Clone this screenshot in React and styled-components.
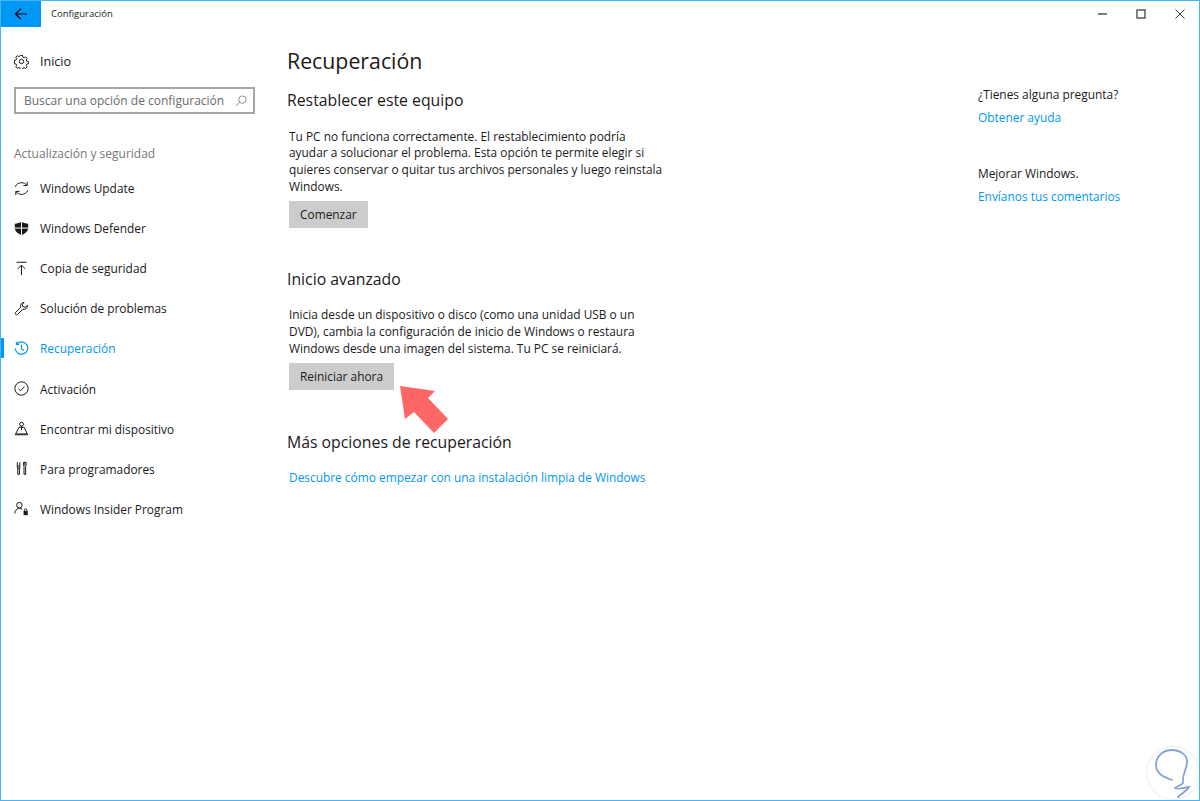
import styled, { createGlobalStyle } from "styled-components";

const ACCENT = "#0098f5";

const GlobalStyle = createGlobalStyle`
	html, body {
		margin: 0;
		padding: 0;
		height: 100%;
		background: #fff;
	}
	#root {
		height: 100%;
	}
	* {
		box-sizing: border-box;
	}
`;

const Stroke = ({ children, width = 1.2 }) => (
	<svg width="15" height="15" viewBox="0 0 18 18" fill="none" stroke="currentColor" strokeWidth={width}>
		{children}
	</svg>
);

const GearIcon = () => (
	<Stroke>
		<circle cx="9" cy="9" r="2.6" />
		<path d="M7.700 1.800h2.600l.4 2.100 1.500.7 1.900-1.100 1.700 1.800-1.100 1.800.6 1.500 2 .5v2.600l-2 .5-.6 1.500 1.100 1.800-1.800 1.800-1.800-1.100-1.500.6-.5 2H7.700l-.5-2-1.500-.6-1.800 1.100-1.800-1.800 1.100-1.800-.6-1.500-2-.5V7.600l2-.5.6-1.500-1.100-1.800 1.800-1.800 1.800 1.100 1.500-.7z" />
	</Stroke>
);
const UpdateIcon = () => (
	<Stroke>
		<path d="M1.500 7C2.500 4 5.500 2 9 2c2.600 0 4.800 1.100 6.300 3" />
		<path d="M16.500 11c-1 3-4 5-7.500 5-2.600 0-4.800-1.100-6.300-3" />
		<path d="M15.800 1v4.500h-4.500M2.200 17v-4.500h4.500" />
	</Stroke>
);
const ShieldIcon = () => (
	<svg width="15" height="15" viewBox="0 0 18 18">
		<path fill="currentColor" d="M9 1c2 1.300 5 2.300 8 2.300v5.200c0 4-3.500 6.800-8 8.500-4.500-1.700-8-4.500-8-8.500V3.300C4 3.300 7 2.300 9 1z" />
		<path stroke="#fff" strokeWidth="1.200" d="M9 1v16M1 8.500h16" />
	</svg>
);
const BackupIcon = () => (
	<Stroke>
		<path d="M3 1.500h12M9 17V5M4.500 9.500 9 5l4.500 4.500" />
	</Stroke>
);
const WrenchIcon = () => (
	<Stroke>
		<path d="M12 1.800a4.200 4.200 0 0 0-3.900 5.700L1.900 13.700a1.700 1.700 0 0 0 2.400 2.400l6.200-6.200A4.200 4.200 0 0 0 16 5.200l-2.600 2.500-2.900-1-.7-2.700 2.400-2.200z" />
	</Stroke>
);
const HistoryIcon = () => (
	<Stroke width={1.5}>
		<path d="M3.500 3.300A7.500 7.500 0 1 1 1.500 9" />
		<path d="M3 .8v3.200h3.400M9 4.500V9.500l3 2" />
	</Stroke>
);
const CheckCircleIcon = () => (
	<Stroke>
		<circle cx="9" cy="9" r="8" />
		<path d="M5.300 9.300 7.800 11.700 12.700 6.700" />
	</Stroke>
);
const FindIcon = () => (
	<Stroke>
		<circle cx="9" cy="3.800" r="2.300" />
		<path d="M9 6v5M6 7.500h6L16 15.500H2zM1 16.500h16" />
	</Stroke>
);
const DevIcon = () => (
	<Stroke>
		<path d="M4 1.500v4.500M7 1.500v4.500M4 6h3v2.500H4zM4.500 8.500v7.500h2V8.500" />
		<path d="M11.500 1.500h3v4l-.5 1v9.500h-2V6.500l-.5-1zM13 1.500v4" />
	</Stroke>
);
const InsiderIcon = () => (
	<Stroke>
		<circle cx="6.500" cy="5" r="3.300" />
		<path d="M1 15c0-3.500 2.200-6 5.500-6 1.300 0 2.400.3 3.300 1" />
		<path fill="currentColor" stroke="none" d="M11.500 12h5v5h-5z" />
		<path d="M12.500 12v-1a1.500 1.500 0 0 1 3 0v1" />
	</Stroke>
);

const NAV_ITEMS = [
	{ label: "Windows Update", icon: <UpdateIcon /> },
	{ label: "Windows Defender", icon: <ShieldIcon /> },
	{ label: "Copia de seguridad", icon: <BackupIcon /> },
	{ label: "Solución de problemas", icon: <WrenchIcon /> },
	{ label: "Recuperación", icon: <HistoryIcon />, active: true },
	{ label: "Activación", icon: <CheckCircleIcon /> },
	{ label: "Encontrar mi dispositivo", icon: <FindIcon /> },
	{ label: "Para programadores", icon: <DevIcon /> },
	{ label: "Windows Insider Program", icon: <InsiderIcon /> },
];

const App = () => {
	return (
		<Frame>
			<GlobalStyle />
			<TitleBar>
				<BackButton>
					<svg width="14" height="14" viewBox="0 0 14 14" fill="none" stroke="#000" strokeWidth="1.2">
						<path d="M13 7H1.500M6.800 1.800 1.500 7l5.300 5.200" />
					</svg>
				</BackButton>
				<WindowTitle>Configuración</WindowTitle>
				<WindowControls>
					<ControlButton>
						<svg width="10" height="10" viewBox="0 0 10 10" stroke="#333" strokeWidth="1.3">
							<path d="M0 5h9" />
						</svg>
					</ControlButton>
					<ControlButton>
						<svg width="10" height="10" viewBox="0 0 10 10" fill="none" stroke="#333" strokeWidth="1.2">
							<rect x="1" y="1" width="8" height="8" />
						</svg>
					</ControlButton>
					<ControlButton>
						<svg width="10" height="10" viewBox="0 0 10 10" stroke="#333" strokeWidth="1">
							<path d="M.5.500l9 9M9.500.500l-9 9" />
						</svg>
					</ControlButton>
				</WindowControls>
			</TitleBar>
			<Body>
				<Sidebar>
					<HomeRow>
						<NavIcon>
							<GearIcon />
						</NavIcon>
						Inicio
					</HomeRow>
					<SearchBox>
						<SearchText>Buscar una opción de configuración</SearchText>
						<svg width="12" height="12" viewBox="0 0 13 13" fill="none" stroke="#888" strokeWidth="1">
							<circle cx="8" cy="5" r="4" />
							<path d="M5 8 1 12" />
						</svg>
					</SearchBox>
					<GroupLabel>Actualización y seguridad</GroupLabel>
					<NavList>
						{NAV_ITEMS.map((item) => (
							<NavRow key={item.label} $active={item.active}>
								<NavIcon>{item.icon}</NavIcon>
								{item.label}
							</NavRow>
						))}
					</NavList>
				</Sidebar>
				<Main>
					<PageTitle>Recuperación</PageTitle>
					<SectionTitle $gap={14}>Restablecer este equipo</SectionTitle>
					<Paragraph>
						Tu PC no funciona correctamente. El restablecimiento podría ayudar a solucionar el problema. Esta opción te permite elegir si quieres conservar o quitar tus archivos personales y luego reinstala Windows.
					</Paragraph>
					<ActionButton>Comenzar</ActionButton>
					<SectionTitle $gap={40}>Inicio avanzado</SectionTitle>
					<Paragraph>
						Inicia desde un dispositivo o disco (como una unidad USB o un DVD), cambia la configuración de inicio de Windows o restaura Windows desde una imagen del sistema. Tu PC se reiniciará.
					</Paragraph>
					<ActionButton>Reiniciar ahora</ActionButton>
					<SectionTitle $gap={41}>Más opciones de recuperación</SectionTitle>
					<MainLink>Descubre cómo empezar con una instalación limpia de Windows</MainLink>
				</Main>
				<Aside>
					<AsideBlock>
						<AsideText>¿Tienes alguna pregunta?</AsideText>
						<AsideLink>Obtener ayuda</AsideLink>
					</AsideBlock>
					<AsideBlock>
						<AsideText>Mejorar Windows.</AsideText>
						<AsideLink>Envíanos tus comentarios</AsideLink>
					</AsideBlock>
				</Aside>
			</Body>
			<PointerArrow width="60" height="60" viewBox="0 0 60 60">
				<polygon fill="#ff6666" points="0,0 35,5 28,12 48,33 34,47 14,26 5,33" />
			</PointerArrow>
			<Watermark width="60" height="60" viewBox="0 0 60 60" fill="none">
				<circle cx="34" cy="33" r="26.500" stroke="#e6edf6" strokeWidth="1" />
				<path
					d="M33 40C25 37 17 34 17 25 17 16 24 10 33 10 42 10 49 16 48 23 47 31 43 35 44 43 42 46 37 46 36 48 40 50 46 47 50 47 47 52 43 53 39 57"
					stroke="#86a3d6"
					strokeWidth="1.800"
					strokeLinecap="round"
				/>
			</Watermark>
		</Frame>
	);
};

export default App;

const Frame = styled.div`
	position: relative;
	height: 801px;
	width: 1200px;
	overflow: hidden;
	background: #fff;
	border: 1px solid #44b4fb;
	font-family: "Open Sans", sans-serif;
	color: #1a1a1a;
`;
const TitleBar = styled.header`
	display: flex;
	align-items: center;
	height: 26px;
`;
const BackButton = styled.div`
	display: flex;
	align-items: center;
	justify-content: center;
	width: 40px;
	height: 26px;
	background: ${ACCENT};
`;
const WindowTitle = styled.span`
	margin-left: 10px;
	padding-bottom: 2px;
	font-size: 9.500px;
	color: #222;
`;
const WindowControls = styled.div`
	display: flex;
	margin-left: auto;
`;
const ControlButton = styled.div`
	display: flex;
	align-items: center;
	justify-content: center;
	width: 38.500px;
	height: 26px;
`;
const Body = styled.div`
	display: flex;
`;
const Sidebar = styled.nav`
	width: 286px;
	flex: none;
`;
const HomeRow = styled.div`
	display: flex;
	align-items: center;
	height: 40px;
	margin-top: 14px;
	padding-left: 13px;
	font-size: 12.500px;
`;
const NavIcon = styled.span`
	display: flex;
	width: 26px;
	flex: none;
`;
const SearchBox = styled.div`
	display: flex;
	align-items: center;
	justify-content: space-between;
	width: 241px;
	height: 27px;
	margin: 6px 0 0 13px;
	padding: 0 6px 0 8px;
	border: 2px solid #a6a6a6;
`;
const SearchText = styled.span`
	font-size: 12px;
	color: #6b6b6b;
	white-space: nowrap;
`;
const GroupLabel = styled.div`
	margin: 30px 0 0 13px;
	font-size: 12px;
	line-height: 20px;
	color: #777;
`;
const NavList = styled.div`
	margin-top: 4px;
`;
const NavRow = styled.div`
	position: relative;
	display: flex;
	align-items: center;
	height: 40.100px;
	padding-left: 13px;
	font-size: 11.900px;
	color: ${({ $active }) => ($active ? ACCENT : "#1a1a1a")};

	&::before {
		content: "";
		display: ${({ $active }) => ($active ? "block" : "none")};
		position: absolute;
		left: 0;
		top: 10px;
		width: 3px;
		height: 20px;
		background: ${ACCENT};
	}
`;
const Main = styled.main`
	width: 376px;
	flex: none;
`;
const PageTitle = styled.h1`
	margin: 20px 0 0;
	font-size: 21.300px;
	font-weight: 400;
	line-height: 28px;
`;
const SectionTitle = styled.h2`
	margin: ${({ $gap }) => $gap}px 0 0;
	font-size: 15.800px;
	font-weight: 400;
	line-height: 22px;
`;
const Paragraph = styled.p`
	margin: 16.500px 0 0 2px;
	font-size: 11.900px;
	line-height: 16.800px;
`;
const ActionButton = styled.div`
	width: fit-content;
	margin: 6px 0 0 2px;
	padding: 0 11px;
	height: 27px;
	line-height: 27px;
	font-size: 11.900px;
	background: #cccccc;
`;
const MainLink = styled.div`
	margin: 14px 0 0 2px;
	font-size: 11.900px;
	line-height: 20px;
	white-space: nowrap;
	color: ${ACCENT};
`;
const Aside = styled.aside`
	margin-left: 315px;
	padding-top: 57px;
`;
const AsideBlock = styled.div`
	margin-bottom: 36px;
`;
const AsideText = styled.div`
	font-size: 11.900px;
	line-height: 20px;
`;
const AsideLink = styled.div`
	margin-top: 3px;
	font-size: 11.900px;
	line-height: 20px;
	white-space: nowrap;
	color: ${ACCENT};
`;
const PointerArrow = styled.svg`
	position: absolute;
	left: 399px;
	top: 385px;
`;
const Watermark = styled.svg`
	position: absolute;
	right: 0;
	bottom: 0;
`;
